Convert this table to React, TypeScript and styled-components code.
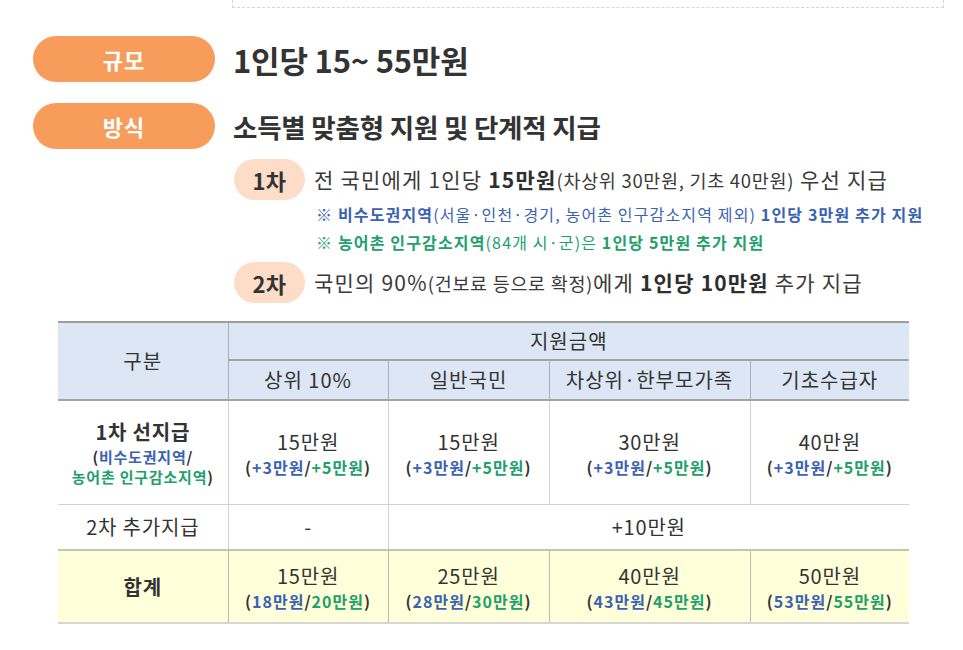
import styled, { createGlobalStyle } from "styled-components";

const GlobalStyle = createGlobalStyle`
	body {
		margin: 0;
		background: #ffffff;
		font-family: "Noto Sans CJK KR", "Noto Sans", sans-serif;
		color: #363636;
	}
`;

type Amount = {
	total: string;
	blue: string;
	green: string;
};

const firstRow: Amount[] = [
	{ total: "15만원", blue: "+3만원", green: "+5만원" },
	{ total: "15만원", blue: "+3만원", green: "+5만원" },
	{ total: "30만원", blue: "+3만원", green: "+5만원" },
	{ total: "40만원", blue: "+3만원", green: "+5만원" },
];

const sumRow: Amount[] = [
	{ total: "15만원", blue: "18만원", green: "20만원" },
	{ total: "25만원", blue: "28만원", green: "30만원" },
	{ total: "40만원", blue: "43만원", green: "45만원" },
	{ total: "50만원", blue: "53만원", green: "55만원" },
];

function AmountCell({ total, blue, green }: Amount) {
	return (
		<>
			<CellMain>{total}</CellMain>
			<CellSub>
				(<Blue>{blue}</Blue>/<Green>{green}</Green>)
			</CellSub>
		</>
	);
}

function App() {
	return (
		<Page>
			<GlobalStyle />
			<TopFrame />
			<Section $gap={28}>
				<Pill>규모</Pill>
				<Headline $size={31}>1인당 15~ 55만원</Headline>
			</Section>
			<Section $gap={21}>
				<Pill>방식</Pill>
				<Headline $size={26.5}>소득별 맞춤형 지원 및 단계적 지급</Headline>
			</Section>

			<Stages>
				<Stage>
					<StageBadge>1차</StageBadge>
					<StageBody>
						<StageText>
							전 국민에게 1인당 <b>15만원</b>
							<Small>(차상위 30만원, 기초 40만원)</Small> 우선 지급
						</StageText>
						<Note $color="#3b62b3">
							<b>※ 비수도권지역</b>
							<span>(서울·인천·경기, 농어촌 인구감소지역 제외)</span>{" "}
							<b>1인당 3만원 추가 지원</b>
						</Note>
						<Note $color="#20a06b">
							<b>※ 농어촌 인구감소지역</b>
							<span>(84개 시·군)은</span> <b>1인당 5만원 추가 지원</b>
						</Note>
					</StageBody>
				</Stage>
				<Stage>
					<StageBadge>2차</StageBadge>
					<StageBody>
						<StageText>
							국민의 90%<Small>(건보료 등으로 확정)</Small>에게{" "}
							<b>1인당 10만원</b> 추가 지급
						</StageText>
					</StageBody>
				</Stage>
			</Stages>

			<Table>
				<colgroup>
					<col style={{ width: 170 }} />
					<col style={{ width: 160 }} />
					<col style={{ width: 161 }} />
					<col style={{ width: 201 }} />
					<col style={{ width: 159 }} />
				</colgroup>
				<thead>
					<tr>
						<HeadCell rowSpan={2} $first>
							구분
						</HeadCell>
						<HeadCell colSpan={4} $height={36}>
							지원금액
						</HeadCell>
					</tr>
					<tr>
						<HeadCell $height={38}>상위 10%</HeadCell>
						<HeadCell $height={38}>일반국민</HeadCell>
						<HeadCell $height={38}>차상위·한부모가족</HeadCell>
						<HeadCell $height={38}>기초수급자</HeadCell>
					</tr>
				</thead>
				<tbody>
					<tr>
						<Cell $height={103} $first>
							<CellMain $bold>1차 선지급</CellMain>
							<RowNote>
								(<Blue>비수도권지역</Blue>/
								<br />
								<Green>농어촌 인구감소지역</Green>)
							</RowNote>
						</Cell>
						{firstRow.map((a, i) => (
							<Cell key={i}>
								<AmountCell {...a} />
							</Cell>
						))}
					</tr>
					<tr>
						<Cell $height={44} $first>
							<CellMain>2차 추가지급</CellMain>
						</Cell>
						<Cell>
							<CellMain>-</CellMain>
						</Cell>
						<Cell colSpan={3}>
							<CellMain>+10만원</CellMain>
						</Cell>
					</tr>
					<tr>
						<SumCell $height={71} $first>
							<CellMain $bold>합계</CellMain>
						</SumCell>
						{sumRow.map((a, i) => (
							<SumCell key={i}>
								<AmountCell {...a} />
							</SumCell>
						))}
					</tr>
				</tbody>
			</Table>
		</Page>
	);
}

const Page = styled.div`
	width: 963px;
	height: 650px;
	box-sizing: border-box;
	padding-left: 33px;
	display: flex;
	flex-direction: column;
	overflow: hidden;
`;

const TopFrame = styled.div`
	margin-left: 199px;
	width: 712px;
	height: 8px;
	border: 1px dashed #d6d6d6;
	border-top: none;
	box-sizing: border-box;
`;

const Section = styled.div<{ $gap: number }>`
	display: flex;
	align-items: center;
	gap: 18px;
	margin-top: ${(p) => p.$gap}px;
`;

const Pill = styled.div`
	width: 182px;
	height: 46px;
	border-radius: 23px;
	background: #f89c5c;
	color: #ffffff;
	font-size: 22px;
	font-weight: 700;
	display: flex;
	align-items: center;
	justify-content: center;
	letter-spacing: 1px;
`;

const Headline = styled.div<{ $size: number }>`
	font-size: ${(p) => p.$size}px;
	font-weight: 700;
	letter-spacing: -0.2px;
	color: #333333;
`;

const Stages = styled.div`
	margin-left: 201px;
	margin-top: 10px;
	display: flex;
	flex-direction: column;
	gap: 6px;
`;

const Stage = styled.div`
	display: flex;
	align-items: flex-start;
	gap: 9px;
`;

const StageBadge = styled.div`
	width: 71px;
	height: 41px;
	border-radius: 21px;
	background: #fddcc8;
	font-size: 22px;
	font-weight: 700;
	letter-spacing: 0.5px;
	display: flex;
	align-items: center;
	justify-content: center;
	color: #333333;
`;

const StageBody = styled.div`
	display: flex;
	flex-direction: column;
`;

const StageText = styled.div`
	height: 41px;
	line-height: 41px;
	font-size: 21px;
	letter-spacing: 1.2px;
	color: #3a3a3a;
	white-space: nowrap;

	b {
		color: #2e2e2e;
	}
`;

const Small = styled.span`
	font-size: 18.5px;
	letter-spacing: 0.7px;
`;

const Note = styled.div<{ $color: string }>`
	height: 28px;
	line-height: 28px;
	font-size: 16px;
	letter-spacing: 1.15px;
	color: ${(p) => p.$color};
	white-space: nowrap;
	margin-left: 2px;

	span {
		font-weight: 400;
	}
`;

const Table = styled.table`
	margin-top: 18px;
	margin-left: 25px;
	width: 851px;
	border-collapse: collapse;
	table-layout: fixed;
	border-top: 2px solid #9d9d9d;
	border-bottom: 2px solid #d6d6d6;
`;

const HeadCell = styled.th<{ $height?: number; $first?: boolean }>`
	height: ${(p) => (p.$height ? `${p.$height}px` : "auto")};
	padding: 0;
	background: #dde6f5;
	font-size: 20px;
	font-weight: 400;
	letter-spacing: 1px;
	line-height: 26px;
	color: #333333;
	text-align: center;
	border: 1px solid #a9adb5;
	border-left: ${(p) => (p.$first ? "none" : "1px solid #a9adb5")};
	border-bottom: 2px solid #a4a4a4;

	&:last-child {
		border-right: none;
	}
`;

const Cell = styled.td<{ $height?: number; $first?: boolean }>`
	height: ${(p) => (p.$height ? `${p.$height}px` : "auto")};
	padding: 0;
	text-align: center;
	vertical-align: middle;
	border: 1px solid #d2d2d2;
	border-left: ${(p) => (p.$first ? "none" : "1px solid #d2d2d2")};

	&:last-child {
		border-right: none;
	}
`;

const SumCell = styled(Cell)`
	background: #ffffd9;
	border-top: 2px solid #c4c4b4;
	border-right-color: #bdbdae;
	border-left: ${(p) => (p.$first ? "none" : "1px solid #bdbdae")};
`;

const CellMain = styled.div<{ $bold?: boolean }>`
	font-size: 20px;
	font-weight: ${(p) => (p.$bold ? 700 : 400)};
	letter-spacing: 0.8px;
	line-height: 28px;
	color: #333333;
`;

const CellSub = styled.div`
	font-size: 16px;
	font-weight: 700;
	letter-spacing: 1px;
	line-height: 22px;
	color: #333333;
`;

const RowNote = styled.div`
	font-size: 15px;
	font-weight: 700;
	letter-spacing: 0.8px;
	line-height: 20px;
	color: #333333;
	margin-top: 1px;
`;

const Blue = styled.span`
	color: #3b62b3;
`;

const Green = styled.span`
	color: #20a06b;
`;

export default App;
